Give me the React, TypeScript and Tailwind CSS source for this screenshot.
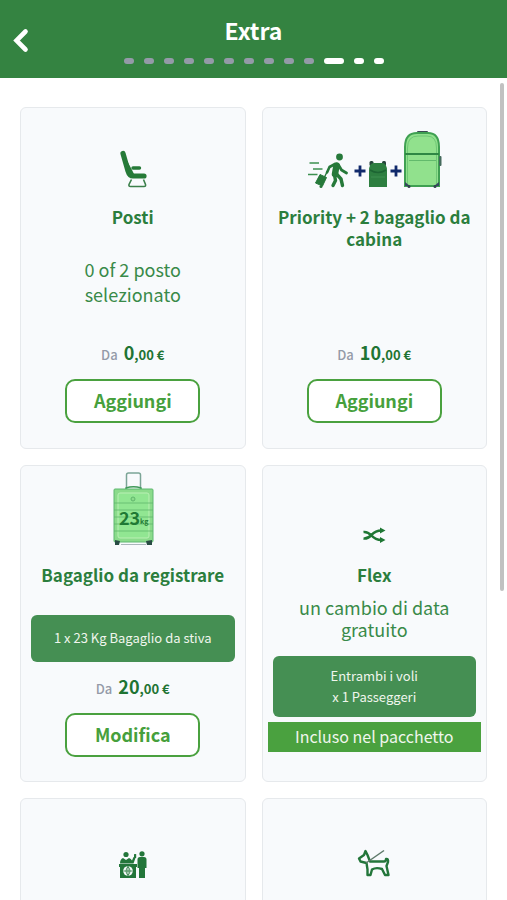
import type { ReactNode } from "react";
import clsx from "clsx";

const STEPS = 13;
const CURRENT_STEP = 10;

function SeatIcon() {
  return (
    <svg width="28" height="38" viewBox="0 0 28 38" fill="none" aria-hidden="true">
      <path d="M4 3.500 9 21Q10.500 26 14 26H25" stroke="#267a38" strokeWidth="5.200" strokeLinecap="round" strokeLinejoin="round" />
      <path d="M5 5 13 20 16 26H10Z" fill="#267a38" />
      <path d="M14 18H20.500" stroke="#267a38" strokeWidth="3.400" strokeLinecap="round" />
      <path d="M12.500 29.500 10 34.500Q9.500 36.500 11.500 36.500H25Q27 36.500 26.500 34.500L24.500 29.500" stroke="#3b7f4a" strokeWidth="1.600" />
    </svg>
  );
}

function PriorityIcon() {
  return (
    <svg width="140" height="58" viewBox="-4 0 140 58" fill="none" aria-hidden="true">
      {/* traveller with trolley */}
      <path d="M1.500 33H11M5 39H14.500M0 44.500H9.500" stroke="#3c9150" strokeWidth="1.600" />
      <g stroke="#26793a" strokeLinecap="round" strokeLinejoin="round">
        <path d="M28.500 35.500 27 44" strokeWidth="6.500" />
        <path d="M28.500 44 33 49 34.500 55.500" strokeWidth="3.400" />
        <path d="M26.500 45 27.500 50.500 25 55.500" strokeWidth="3.400" />
        <path d="M27 34 21.500 37 19 42.500" strokeWidth="2.600" />
        <path d="M30.500 35 33.500 40 38.500 43" strokeWidth="2.800" />
        <path d="M19 42 16.500 47" strokeWidth="1.400" />
      </g>
      <circle cx="31.500" cy="27" r="3.400" fill="#26793a" />
      <path d="M12 44.500 18.500 47.500 14.500 56 7.500 53Z" fill="#26793a" stroke="#26793a" strokeLinejoin="round" />
      <circle cx="13" cy="56.500" r="1.500" fill="#26793a" />

      <path d="M46.500 41H57.500M52 35.500V46.500M82.500 41H93.500M88 35.500V46.500" stroke="#10296b" strokeWidth="2.800" />

      {/* backpack */}
      <rect x="61.500" y="31" width="4" height="5" rx="1.500" fill="#25433a" />
      <rect x="74" y="31" width="4" height="5" rx="1.500" fill="#25433a" />
      <path d="M61 57V41Q61 33 66 33H74Q79 33 79 41V57Z" fill="#2d7e40" />
      <path d="M62 40Q70 45 78 40" stroke="#1d6533" strokeWidth="1.500" />
      <path d="M63 47H77" stroke="#3f8f50" />

      {/* cabin suitcase */}
      <rect x="109" y="1" width="11" height="4" rx="1" fill="#3b4953" />
      <path d="M97 56V17Q97 3 109 3H120Q131 3 131 17V56Z" fill="#91e18d" stroke="#3fa052" strokeWidth="2" />
      <path d="M99.500 54V18Q99.500 6 110 6H119Q128.500 6 128.500 18V54" stroke="#6fc776" />
      <path d="M97 24H131" stroke="#2f8744" strokeWidth="2" />
      <path d="M101 30.500H128" stroke="#62ba6c" />
      <rect x="131" y="26" width="2.500" height="10" rx="1" fill="#456a5d" />
      <path d="M97 52V56H102ZM131 52V56H126Z" fill="#34495e" />
      <circle cx="101" cy="56.500" r="1.500" fill="#344250" />
      <circle cx="127" cy="56.500" r="1.500" fill="#344250" />
    </svg>
  );
}

function LuggageIcon() {
  return (
    <svg width="42" height="74" viewBox="0 0 42 74" fill="none" aria-hidden="true">
      <path d="M14.500 17V3Q14.500 1 16.500 1H26.500Q28.500 1 28.500 3V17" stroke="#7ba596" strokeWidth="1.500" />
      <path d="M14 18V16Q21.500 13.500 29 16V18" stroke="#3f9958" strokeWidth="1.500" />
      <rect x="2" y="17" width="39" height="53" rx="1" fill="#8bdb8b" stroke="#5fb870" />
      <rect x="6" y="21" width="31" height="45" rx="2" fill="#91e692" stroke="#baf0b4" />
      <path d="M2 31H41M2 38H41M2 45H41M2 52H41M2 59H41" stroke="#60b66d" strokeWidth="0.800" />
      <circle cx="21" cy="27" r="2" fill="#8bdb8b" stroke="#60b66d" />
      <path d="M3 68V73H7L8 69ZM40 68V73H35L34 69Z" fill="#294c44" />
      <path d="M9 72.500H34" stroke="#aab6bb" />
      <text x="7" y="53" fill="#1f7934" fontFamily="Noto Sans CJK SC, sans-serif" fontWeight="700" fontSize="18">23</text>
      <text x="28" y="52" fill="#1f7934" fontFamily="Noto Sans CJK SC, sans-serif" fontWeight="700" fontSize="7">kg</text>
    </svg>
  );
}

function FlexIcon() {
  return (
    <svg width="24" height="20" viewBox="0 0 24 20" fill="none" aria-hidden="true">
      <path d="M1.500 6Q5.500 5.500 9.500 9.500 13.500 14 19.500 14M1.500 12.500Q5.500 13 9.500 9 13.500 4.500 19.500 4.500" stroke="#1f7734" strokeWidth="2.600" />
      <path d="M18 1.500 23.500 4.500 18 7.500ZM18 11 23.500 14 18 17Z" fill="#1f7734" />
    </svg>
  );
}

function CheckInIcon() {
  return (
    <svg width="30" height="28" viewBox="0 0 30 28" aria-hidden="true">
      <g fill="#23763a">
        <circle cx="8" cy="3.500" r="2.600" />
        <path d="M2 12.500Q2 8 5 7L8 9 11 7Q13 7.500 14 9.500L15.500 6 17.500 7 15.500 12.500Z" />
        <rect x="16" y="3" width="2.200" height="4" rx="0.500" />
        <path d="M1 13H19V16H18V27H2V16H1Z" />
        <circle cx="24" cy="2.800" r="2.600" />
        <path d="M19.500 8.500Q19.500 6 22 6H26Q28.500 6 28.500 8.500V17H27V27H21V17H19.500Z" />
      </g>
      <circle cx="10" cy="20" r="4.800" fill="#f8fafb" />
      <path d="M5.500 20H14.500M10 15.500V24.500M10 15.500Q6 20 10 24.500M10 15.500Q14 20 10 24.500" fill="none" stroke="#23763a" strokeWidth="0.800" />
    </svg>
  );
}

function DogIcon() {
  return (
    <svg width="34" height="30" viewBox="0 0 34 30" fill="none" aria-hidden="true">
      <path
        d="M2 9.500 7 6 8.500 2 10.500 6 13 12.500H27Q29 12.500 29 10Q31.500 9.500 31 13L29.500 17 31.500 26H28L25 20Q19 18 15 20.500L13.500 26H10.500V20.500L9.500 14 3.500 12.500Z"
        stroke="#23763a"
        strokeWidth="2.400"
        strokeLinejoin="round"
      />
      <path d="M9 14 27 1.500" stroke="#5d7969" strokeWidth="1.500" />
    </svg>
  );
}

function ExtraCard({ icon, title, tall, children }: { icon: ReactNode; title?: string; tall?: boolean; children?: ReactNode }) {
  return (
    <section
      className={clsx(
        "flex flex-col items-center rounded-md border border-[#e6e9ec] bg-[#f8fafc] text-center",
        tall ? "min-h-[342px]" : "min-h-[317px]"
      )}
    >
      <div className="flex h-20 shrink-0 items-end justify-center">{icon}</div>
      {title && <h2 className="mt-[18px] px-2 text-[17px] leading-[22px] font-bold text-[#2b7e3d]">{title}</h2>}
      {children}
    </section>
  );
}

function Price({ euros }: { euros: number }) {
  return (
    <p className="flex items-baseline justify-center gap-1.5 leading-6 font-bold text-[#1f7433]">
      <span className="text-[13px] font-medium text-[#949aa8]">Da</span>
      <span className="text-lg leading-6">
        {euros}
        <span className="text-[13px]">,00 €</span>
      </span>
    </p>
  );
}

function ActionButton({ label }: { label: string }) {
  return (
    <button
      type="button"
      className="h-11 w-[135px] rounded-[10px] border-2 border-[#4aa13f] bg-white pb-0.5 text-lg leading-5 font-bold text-[#46a03c]"
    >
      {label}
    </button>
  );
}

export default function App() {
  return (
    <div className="relative flex h-screen flex-col overflow-hidden bg-white font-['Noto_Sans_CJK_SC',sans-serif]">
      <header className="relative flex h-[78px] shrink-0 flex-col items-center bg-[#348341] pt-4">
        <button type="button" aria-label="Indietro" className="absolute top-7 left-3">
          <svg width="18" height="25" viewBox="0 0 18 25" fill="none" aria-hidden="true">
            <path d="M13.500 3.500 4.500 12.500 13.500 21.500" stroke="white" strokeWidth="4.600" strokeLinecap="round" />
          </svg>
        </button>
        <h1 className="text-[23px] leading-7 font-bold text-white">Extra</h1>
        <div className="mt-3.5 flex gap-2.5">
          {Array.from({ length: STEPS }, (_, i) => (
            <span
              key={i}
              className={clsx("h-1.5 rounded-full", i === CURRENT_STEP ? "w-5" : "w-2.5", i < CURRENT_STEP ? "bg-[#949aa8]" : "bg-white")}
            />
          ))}
        </div>
      </header>

      <main className="min-h-0 flex-1 overflow-hidden px-5 pt-[29px]">
        <div className="grid grid-cols-2 gap-4">
          <ExtraCard icon={<SeatIcon />} title="Posti" tall>
            <p className="mt-[29px] w-32 text-lg leading-[25px] text-[#398a49]">0 of 2 posto selezionato</p>
            <div className="mt-auto mb-[25px] flex flex-col items-center gap-3">
              <Price euros={0} />
              <ActionButton label="Aggiungi" />
            </div>
          </ExtraCard>

          <ExtraCard icon={<PriorityIcon />} title="Priority + 2 bagaglio da cabina" tall>
            <div className="mt-auto mb-[25px] flex flex-col items-center gap-3">
              <Price euros={10} />
              <ActionButton label="Aggiungi" />
            </div>
          </ExtraCard>

          <ExtraCard icon={<LuggageIcon />} title="Bagaglio da registrare">
            <div className="mt-auto mb-6 flex flex-col items-center gap-3 self-stretch px-2.5">
              <p className="self-stretch rounded-md bg-[#458f53] px-2 pt-[11px] pb-[13px] text-[13px] leading-[23px] text-[#f0f6ed]">
                1 x 23 Kg Bagaglio da stiva
              </p>
              <Price euros={20} />
              <ActionButton label="Modifica" />
            </div>
          </ExtraCard>

          <ExtraCard icon={<FlexIcon />} title="Flex">
            <p className="mt-2.5 w-44 text-lg leading-[22px] text-[#398a49]">un cambio di data gratuito</p>
            <div className="mt-auto mb-[29px] self-stretch px-[5px]">
              <p className="mx-[5px] rounded-md bg-[#458f53] pt-[9px] pb-2.5 text-[13px] leading-[21px] text-[#f0f6ed]">
                Entrambi i voli
                <br />x 1 Passeggeri
              </p>
              <p className="mt-[5px] bg-[#4aa13f] pb-0.5 text-base leading-7 text-[#f0f6ed]">Incluso nel pacchetto</p>
            </div>
          </ExtraCard>

          <ExtraCard icon={<CheckInIcon />} />
          <ExtraCard icon={<DogIcon />} />
        </div>
      </main>

      {/* scroll indicator */}
      <div className="absolute top-[83px] right-[3px] h-[508px] w-1 rounded-full bg-[#c1c1c1]" />
    </div>
  );
}
